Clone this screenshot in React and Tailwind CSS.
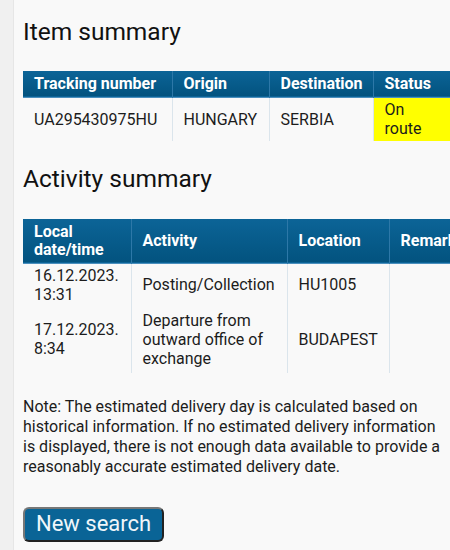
import React from "react";

const th = "text-left align-middle font-bold text-white text-[16px] leading-[18px] pl-[11px] pr-[6px] py-[2px] border-r border-[#2d78a8] last:border-r-0";
const td = "text-left align-middle text-[16px] leading-[19px] text-[#1c1c1c] pl-[11px] pr-[4px] py-[2px] border-r border-[#dbe5ec]";

export default function App() {
  return (
    <div className="flex w-[450px] h-[550px] overflow-hidden bg-[#f9f9f9]" style={{ fontFamily: "Roboto, 'Noto Sans', sans-serif" }}>
      <div className="w-[14px] shrink-0 bg-[#f0f0f0] border-r border-[#e6e6e6]" />
      <div className="flex-1 min-w-0 pl-[9px] pt-[16px]">
        <h2 className="text-[24.5px] leading-[32px] text-[#111] font-normal">Item summary</h2>

        <table className="mt-[23px] table-fixed border-collapse w-[436px]">
          <colgroup>
            <col className="w-[149px]" />
            <col className="w-[97px]" />
            <col className="w-[104px]" />
            <col className="w-[86px]" />
          </colgroup>
          <thead>
            <tr className="h-[26px] bg-gradient-to-b from-[#0c6497] to-[#03537f] border-b border-[#4b8fbd]">
              <th className={th}>Tracking number</th>
              <th className={th}>Origin</th>
              <th className={th}>Destination</th>
              <th className={th}>Status</th>
            </tr>
          </thead>
          <tbody>
            <tr className="h-[44px]">
              <td className={td}>UA295430975HU</td>
              <td className={td}>HUNGARY</td>
              <td className={td}>SERBIA</td>
              <td className={td + " bg-[#ffff00] pr-[20px]"}>On route</td>
            </tr>
          </tbody>
        </table>

        <h2 className="mt-[22px] text-[24.5px] leading-[32px] text-[#111] font-normal">Activity summary</h2>

        <table className="mt-[24px] table-fixed border-collapse w-[466px]">
          <colgroup>
            <col className="w-[108px]" />
            <col className="w-[156px]" />
            <col className="w-[102px]" />
            <col className="w-[100px]" />
          </colgroup>
          <thead>
            <tr className="h-[44px] bg-gradient-to-b from-[#0c6497] to-[#03537f] border-b border-[#4b8fbd]">
              <th className={th}>Local date/time</th>
              <th className={th}>Activity</th>
              <th className={th}>Location</th>
              <th className={th}>Remarks</th>
            </tr>
          </thead>
          <tbody>
            <tr className="h-[42px]">
              <td className={td}>16.12.2023. 13:31</td>
              <td className={td}>Posting/Collection</td>
              <td className={td}>HU1005</td>
              <td className={td}></td>
            </tr>
            <tr className="h-[67px]">
              <td className={td}>17.12.2023. 8:34</td>
              <td className={td}>Departure from outward office of exchange</td>
              <td className={td}>BUDAPEST</td>
              <td className={td}></td>
            </tr>
          </tbody>
        </table>

        <p className="mt-[24px] w-[424px] text-[16px] leading-[20px] text-[#1c1c1c]">
          Note: The estimated delivery day is calculated based on historical information. If no estimated delivery information is displayed, there is not enough data available to provide a reasonably accurate estimated delivery date.
        </p>

        <button className="mt-[30px] h-[35px] px-[11px] rounded-[6px] bg-[#0a6496] border-2 border-t-[#777] border-l-[#777] border-r-[#222] border-b-[#222] text-[22px] leading-[28px] text-[#f0f6fa]">
          New search
        </button>
      </div>
    </div>
  );
}
